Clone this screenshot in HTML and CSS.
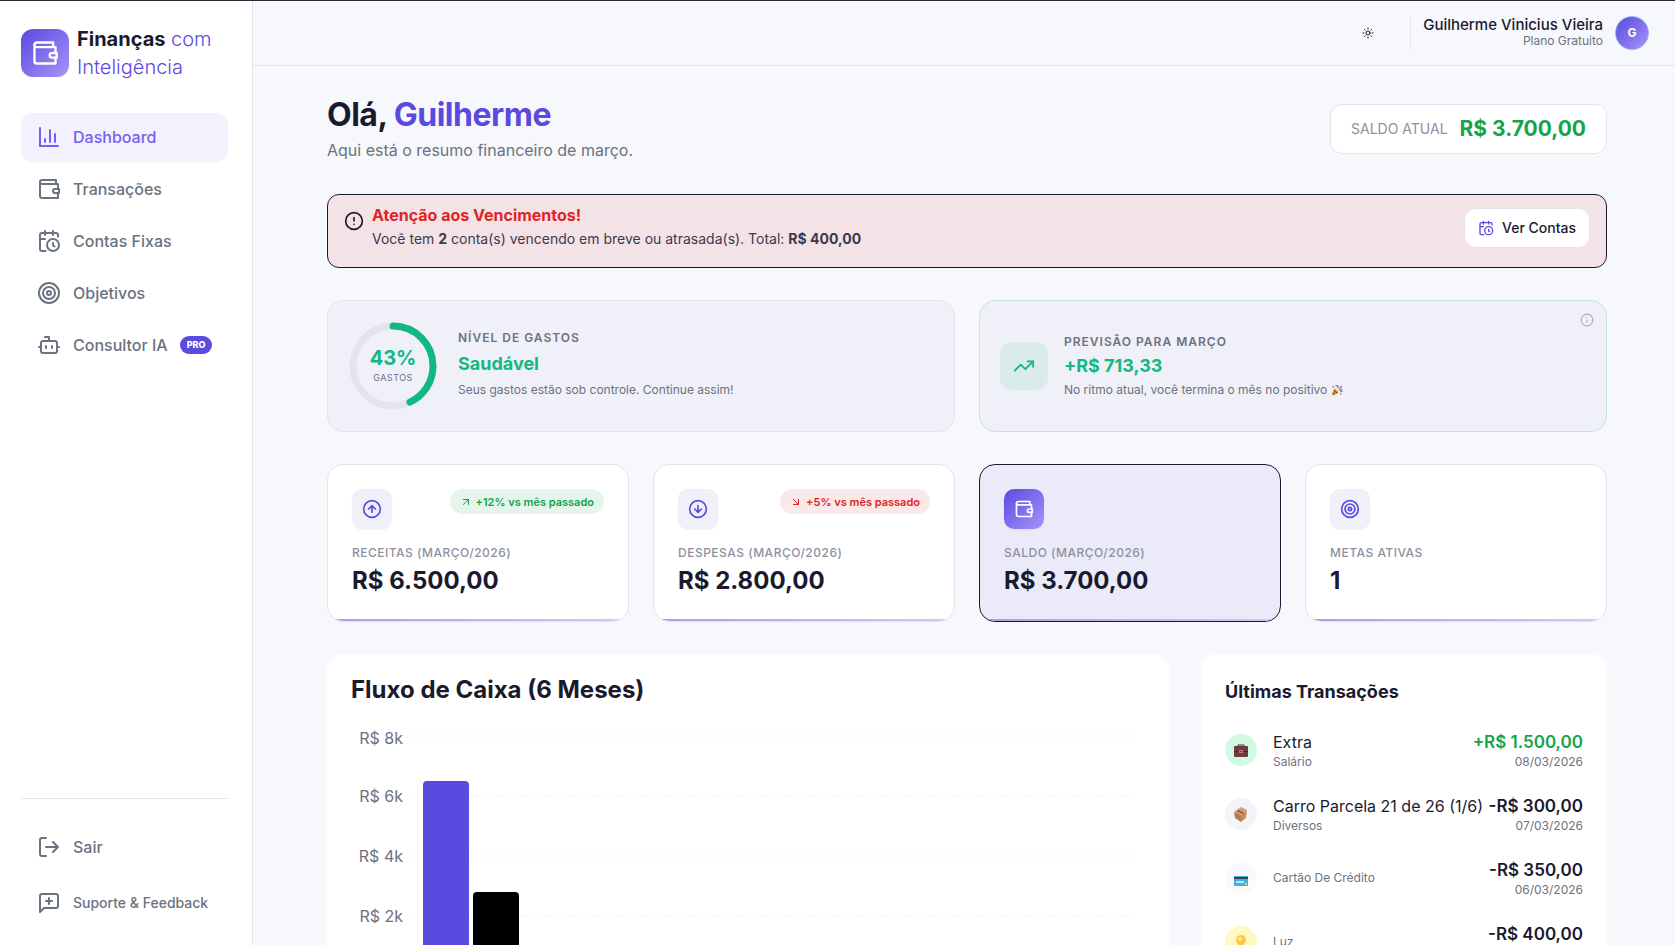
FILE: index.html
```html
<!DOCTYPE html>
<html lang="pt-BR">
<head>
    <meta charset="UTF-8">
    <meta name="viewport" content="width=device-width, initial-scale=1.0">
    <title>Finanças com Inteligência</title>
    <link rel="stylesheet" href="styles.css">
</head>
<body>
    <!-- Ícones reutilizados -->
    <svg class="sprite" aria-hidden="true">
        <symbol id="i-wallet" viewBox="0 0 24 24"><path d="M21 12V7H5a2 2 0 0 1 0-4h14v4"/><path d="M3 5v14a2 2 0 0 0 2 2h16v-5"/><path d="M18 12a2 2 0 0 0 0 4h4v-4Z"/></symbol>
        <symbol id="i-calendar" viewBox="0 0 24 24"><path d="M21 7.5V6a2 2 0 0 0-2-2H5a2 2 0 0 0-2 2v14a2 2 0 0 0 2 2h3.5"/><path d="M16 2v4M8 2v4M3 10h5"/><path d="M17.5 17.5 16 16.3V14"/><circle cx="16" cy="16" r="6"/></symbol>
        <symbol id="i-target" viewBox="0 0 24 24"><circle cx="12" cy="12" r="10"/><circle cx="12" cy="12" r="6"/><circle cx="12" cy="12" r="2"/></symbol>
    </svg>

    <div class="app">
        <aside class="sidebar">
            <div class="brand">
                <span class="brand-icon"><svg class="icon"><use href="#i-wallet"/></svg></span>
                <span class="brand-name"><strong>Finanças</strong> com Inteligência</span>
            </div>
            <nav class="nav">
                <a class="nav-item active" href="#">
                    <svg class="icon" viewBox="0 0 24 24"><path d="M3 3v18h18M18 17V9M13 17V5M8 17v-3"/></svg>
                    Dashboard
                </a>
                <a class="nav-item" href="#"><svg class="icon"><use href="#i-wallet"/></svg>Transações</a>
                <a class="nav-item" href="#"><svg class="icon"><use href="#i-calendar"/></svg>Contas Fixas</a>
                <a class="nav-item" href="#"><svg class="icon"><use href="#i-target"/></svg>Objetivos</a>
                <a class="nav-item" href="#">
                    <svg class="icon" viewBox="0 0 24 24"><path d="M12 8V4H8"/><rect width="16" height="12" x="4" y="8" rx="2"/><path d="M2 14h2M20 14h2M15 13v2M9 13v2"/></svg>
                    Consultor IA
                    <span class="pro">PRO</span>
                </a>
            </nav>
            <div class="sidebar-footer">
                <button class="nav-item" type="button">
                    <svg class="icon" viewBox="0 0 24 24"><path d="M9 21H5a2 2 0 0 1-2-2V5a2 2 0 0 1 2-2h4M16 17l5-5-5-5M21 12H9"/></svg>
                    Sair
                </button>
                <button class="nav-item small" type="button">
                    <svg class="icon" viewBox="0 0 24 24"><path d="M21 15a2 2 0 0 1-2 2H7l-4 4V5a2 2 0 0 1 2-2h14a2 2 0 0 1 2 2zM12 7v6M9 10h6"/></svg>
                    Suporte &amp; Feedback
                </button>
            </div>
        </aside>

        <div class="page">
            <header class="topbar">
                <button class="theme" type="button" aria-label="Alternar tema">
                    <svg class="icon" viewBox="0 0 24 24"><circle cx="12" cy="12" r="4"/><path d="M12 2v2M12 20v2M4.93 4.93l1.41 1.41M17.66 17.66l1.41 1.41M2 12h2M20 12h2M6.34 17.66l-1.41 1.41M19.07 4.93l-1.41 1.41"/></svg>
                </button>
                <div class="user">
                    <div class="user-info">
                        <span class="user-name">Guilherme Vinicius Vieira</span>
                        <span class="user-plan">Plano Gratuito</span>
                    </div>
                    <span class="avatar">G</span>
                </div>
            </header>

            <main class="content">
                <section class="welcome">
                    <div>
                        <h1>Olá, <span>Guilherme</span></h1>
                        <p>Aqui está o resumo financeiro de março.</p>
                    </div>
                    <div class="balance">
                        <span class="balance-label">SALDO ATUAL</span>
                        <span class="balance-value">R$ 3.700,00</span>
                    </div>
                </section>

                <section class="alert">
                    <svg class="icon" viewBox="0 0 24 24"><circle cx="12" cy="12" r="10"/><path d="M12 8v4M12 16h.01"/></svg>
                    <div class="alert-text">
                        <h2>Atenção aos Vencimentos!</h2>
                        <p>Você tem <strong>2</strong> conta(s) vencendo em breve ou atrasada(s). Total: <strong>R$ 400,00</strong></p>
                    </div>
                    <button class="alert-button" type="button"><svg class="icon"><use href="#i-calendar"/></svg>Ver Contas</button>
                </section>

                <section class="insights">
                    <article class="insight">
                        <div class="gauge">
                            <svg viewBox="0 0 90 90">
                                <circle class="gauge-track" cx="45" cy="45" r="40"/>
                                <circle class="gauge-value" cx="45" cy="45" r="40" pathLength="100"/>
                            </svg>
                            <div class="gauge-text"><strong>43%</strong><span>GASTOS</span></div>
                        </div>
                        <div class="insight-text">
                            <h3>NÍVEL DE GASTOS</h3>
                            <strong>Saudável</strong>
                            <p>Seus gastos estão sob controle. Continue assim!</p>
                        </div>
                    </article>
                    <article class="insight forecast">
                        <span class="trend-icon"><svg class="icon" viewBox="0 0 24 24"><path d="m22 7-8.5 8.5-5-5L2 17"/><path d="M16 7h6v6"/></svg></span>
                        <div class="insight-text">
                            <h3>PREVISÃO PARA MARÇO</h3>
                            <strong>+R$ 713,33</strong>
                            <p>No ritmo atual, você termina o mês no positivo
                                <svg class="party" viewBox="0 0 24 24"><path fill="#f2a52c" d="M1 23 7 8l9 9z"/><path fill="#8a4b32" d="m4 16 5 5-3 1-3-3zM6 11l8 7-3 1-6-5z"/><path fill="#d94a8c" d="M9 2h3v3H9zM19 13h4v3h-4zM3 4h3v3H3z"/><path fill="#36a9e1" d="m12 8 1-6 3 1-1 6zM17 12l6-3v3l-5 3z"/><path fill="#f45b78" d="m15 11 5-8 3 2-6 7zM18 18h3v3h-3z"/></svg>
                            </p>
                        </div>
                        <button class="info" type="button" aria-label="Informações"><svg class="icon" viewBox="0 0 24 24"><circle cx="12" cy="12" r="10"/><path d="M12 16v-4M12 8h.01"/></svg></button>
                    </article>
                </section>

                <section class="stats">
                    <article class="stat">
                        <div class="stat-top">
                            <span class="stat-icon"><svg class="icon" viewBox="0 0 24 24"><circle cx="12" cy="12" r="10"/><path d="m16 12-4-4-4 4M12 16V8"/></svg></span>
                            <span class="change up"><svg class="icon" viewBox="0 0 24 24"><path d="M7 7h10v10M7 17 17 7"/></svg>+12% vs mês passado</span>
                        </div>
                        <h3>RECEITAS (MARÇO/2026)</h3>
                        <strong>R$ 6.500,00</strong>
                    </article>
                    <article class="stat">
                        <div class="stat-top">
                            <span class="stat-icon"><svg class="icon" viewBox="0 0 24 24"><circle cx="12" cy="12" r="10"/><path d="m8 12 4 4 4-4M12 8v8"/></svg></span>
                            <span class="change down"><svg class="icon" viewBox="0 0 24 24"><path d="m7 7 10 10M17 7v10H7"/></svg>+5% vs mês passado</span>
                        </div>
                        <h3>DESPESAS (MARÇO/2026)</h3>
                        <strong>R$ 2.800,00</strong>
                    </article>
                    <article class="stat highlight">
                        <div class="stat-top">
                            <span class="stat-icon"><svg class="icon"><use href="#i-wallet"/></svg></span>
                        </div>
                        <h3>SALDO (MARÇO/2026)</h3>
                        <strong>R$ 3.700,00</strong>
                    </article>
                    <article class="stat">
                        <div class="stat-top">
                            <span class="stat-icon"><svg class="icon"><use href="#i-target"/></svg></span>
                        </div>
                        <h3>METAS ATIVAS</h3>
                        <strong>1</strong>
                    </article>
                </section>

                <section class="panels">
                    <article class="panel">
                        <h2 class="chart-title">Fluxo de Caixa (6 Meses)</h2>
                        <svg class="chart" width="100%" height="300">
                            <g class="grid">
                                <line x1="60" x2="99%" y1="20" y2="20"/>
                                <line x1="60" x2="99%" y1="80" y2="80"/>
                                <line x1="60" x2="99%" y1="140" y2="140"/>
                                <line x1="60" x2="99%" y1="200" y2="200"/>
                                <line x1="60" x2="99%" y1="260" y2="260"/>
                            </g>
                            <g class="axis">
                                <text x="52" y="28">R$ 8k</text>
                                <text x="52" y="86">R$ 6k</text>
                                <text x="52" y="146">R$ 4k</text>
                                <text x="52" y="206">R$ 2k</text>
                                <text x="52" y="266">R$ 0k</text>
                            </g>
                            <path class="bar-in" d="M72 260V69a4 4 0 0 1 4-4h38a4 4 0 0 1 4 4v191z"/>
                            <path class="bar-out" d="M122 260v-80a4 4 0 0 1 4-4h38a4 4 0 0 1 4 4v80z"/>
                        </svg>
                    </article>

                    <article class="panel">
                        <h2 class="list-title">Últimas Transações</h2>
                        <ul class="transactions">
                            <li>
                                <span class="category salary"><svg viewBox="0 0 16 16"><path fill="none" stroke="#4b2936" d="M5 5V3h6v2"/><rect x="1" y="4" width="14" height="11" rx="1" fill="#6d3c4b"/><path fill="#4b2936" d="M1 9h14v1H1z"/><path fill="#d8793d" d="M6 8h4v3H6z"/><path fill="#6d3c4b" d="M7 9h2v1H7z"/></svg></span>
                                <div class="description"><span>Extra</span><small>Salário</small></div>
                                <div class="amount positive"><strong>+R$ 1.500,00</strong><small>08/03/2026</small></div>
                            </li>
                            <li>
                                <span class="category misc"><svg viewBox="0 0 16 16"><path fill="#d99a6c" d="m1 6 7-5 6 3-6 5z"/><path fill="#b97850" d="m1 6 7 3v7l-6-4z"/><path fill="#c88b5d" d="m8 9 6-5-1 8-5 4z"/><path fill="#7d4f33" d="m5 4 6 3-1 1-6-3z"/></svg></span>
                                <div class="description"><span>Carro Parcela 21 de 26 (1/6)</span><small>Diversos</small></div>
                                <div class="amount"><strong>-R$ 300,00</strong><small>07/03/2026</small></div>
                            </li>
                            <li>
                                <span class="category card"><svg viewBox="0 0 16 16"><rect x="1" y="6" width="14" height="10" rx="1" fill="#42afe3"/><path fill="#39434f" d="M1 7h14v2H1z"/><path fill="#c7e5ef" d="M3 11h8v2H3z"/><path fill="#f2c94c" d="M12 13h2v2h-2z"/></svg></span>
                                <div class="description"><small>Cartão De Crédito</small></div>
                                <div class="amount"><strong>-R$ 350,00</strong><small>06/03/2026</small></div>
                            </li>
                            <li>
                                <span class="category light"><svg viewBox="0 0 16 16"><circle cx="8" cy="6" r="5" fill="#ffc73d"/><path fill="#ffc73d" d="m4 8 2 4h4l2-4z"/><circle cx="7" cy="5" r="2" fill="#ffe69a"/><path fill="#8b97a3" d="M6 12h4v2l-1 2H7l-1-2z"/></svg></span>
                                <div class="description"><small>Luz</small></div>
                                <div class="amount"><strong>-R$ 400,00</strong><small>05/03/2026</small></div>
                            </li>
                        </ul>
                    </article>
                </section>
            </main>
        </div>
    </div>
</body>
</html>
```

FILE: styles.css
```css
* {
    box-sizing: border-box;
}
body {
    margin: 0;
    border-top: 1px solid #2b2a33;
    background: #f7f8fc;
    color: #1a1a2e;
    font-family: Inter, "Liberation Sans", sans-serif;
    font-size: 16px;
    line-height: 24px;
}
h1, h2, h3, p, ul {
    margin: 0;
    padding: 0;
}
button {
    font: inherit;
    color: inherit;
    background: none;
    border: 0;
    padding: 0;
    cursor: pointer;
}
small {
    font-size: 12px;
    line-height: 16px;
    color: #6b7280;
}
.sprite {
    display: none;
}
.icon {
    width: 24px;
    height: 24px;
    flex-shrink: 0;
    fill: none;
    stroke: currentColor;
    stroke-width: 2;
    stroke-linecap: round;
    stroke-linejoin: round;
}
.app {
    display: flex;
    align-items: flex-start;
}

/* Menu lateral */
.sidebar {
    position: sticky;
    top: 0;
    flex: 0 0 253px;
    min-width: 0;
    height: calc(100vh - 1px);
    display: flex;
    flex-direction: column;
    padding: 24px 24px 18px 21px;
    background: #fff;
    border-right: 1px solid #e4e4f0;
}
.brand {
    display: flex;
    align-items: center;
    gap: 8px;
    margin-bottom: 32px;
}
.brand-icon {
    display: grid;
    place-items: center;
    width: 48px;
    height: 48px;
    border-radius: 12px;
    color: #fff;
    background: linear-gradient(135deg, #5b4adf, #a594f9);
}
.brand-icon .icon {
    width: 28px;
    height: 28px;
}
.brand-name {
    flex: 1;
    font-size: 20px;
    line-height: 28px;
    font-weight: 300;
    color: #5b4adf;
}
.brand-name strong {
    font-weight: 700;
    color: #1a1a2e;
}
.nav {
    display: flex;
    flex-direction: column;
    gap: 4px;
}
.nav-item {
    display: flex;
    align-items: center;
    gap: 12px;
    height: 48px;
    padding: 0 16px;
    border-radius: 12px;
    font-weight: 500;
    color: #6b7280;
    text-decoration: none;
    white-space: nowrap;
}
.nav-item.active {
    background: #f3f1fd;
    color: #7261f0;
    box-shadow: 0 1px 2px rgba(26, 26, 46, 0.05);
}
.nav-item.small {
    font-size: 14px;
}
.pro {
    padding: 0 7px;
    border-radius: 9px;
    background: #5b4adf;
    color: #fff;
    font-size: 9px;
    line-height: 18px;
    font-weight: 800;
}
.sidebar-footer {
    display: flex;
    flex-direction: column;
    gap: 8px;
    margin-top: auto;
    padding-top: 24px;
    border-top: 1px solid #e4e4f0;
}

/* Barra superior */
.page {
    flex: 1;
    min-width: 0;
}
.topbar {
    display: flex;
    justify-content: flex-end;
    align-items: center;
    gap: 36px;
    height: 65px;
    padding: 0 26px;
    border-bottom: 1px solid #e4e4f0;
}
.theme {
    display: flex;
}
.theme .icon {
    width: 12px;
    height: 12px;
}
.user {
    display: flex;
    align-items: center;
    gap: 12px;
    padding-left: 12px;
    border-left: 1px solid #e4e4f0;
}
.user-info {
    display: flex;
    flex-direction: column;
    text-align: right;
}
.user-name {
    font-size: 15px;
    line-height: 16px;
    font-weight: 500;
}
.user-plan {
    font-size: 12px;
    line-height: 16px;
    color: #6b7280;
}
.avatar {
    display: grid;
    place-items: center;
    width: 34px;
    height: 34px;
    border: 1px solid #8ab4f8;
    border-radius: 50%;
    background: linear-gradient(135deg, #5b4adf, #a594f9);
    color: #fff;
    font-size: 12px;
    font-weight: 700;
}

/* Conteúdo */
.content {
    display: flex;
    flex-direction: column;
    gap: 32px;
    max-width: 1354px;
    margin: 0 auto;
    padding: 30px 34px 32px 40px;
}
.welcome {
    display: flex;
    justify-content: space-between;
    align-items: center;
}
.welcome h1 {
    font-size: 32px;
    line-height: 38px;
    font-weight: 700;
    letter-spacing: -0.5px;
}
.welcome h1 span {
    color: #5b4adf;
}
.welcome p {
    margin-top: 4px;
    color: #6b7280;
}
.balance {
    display: flex;
    align-items: center;
    gap: 12px;
    height: 50px;
    padding: 0 20px;
    border: 1px solid #e4e4f0;
    border-radius: 12px;
    background: #fff;
}
.balance-label {
    font-size: 14px;
    color: #8e90a0;
}
.balance-value {
    font-size: 21px;
    font-weight: 700;
    color: #16a34a;
}
.alert {
    display: flex;
    align-items: flex-start;
    gap: 8px;
    height: 74px;
    padding: 8px 16px;
    border: 1px solid #1a1a2e;
    border-radius: 12px;
    background: #f4e3e6;
}
.alert > .icon {
    width: 20px;
    height: 20px;
    margin-top: 8px;
}
.alert-text {
    flex: 1;
}
.alert-text h2 {
    font-size: 16px;
    font-weight: 700;
    color: #dc2626;
}
.alert-text p {
    font-size: 14px;
    color: #3b3a4c;
}
.alert-button {
    display: flex;
    align-items: center;
    gap: 8px;
    height: 40px;
    margin-top: 5px;
    padding: 0 13px;
    border: 1px solid #e4e4f0;
    border-radius: 12px;
    background: #fff;
    font-size: 14px;
    font-weight: 500;
}
.alert-button .icon {
    width: 16px;
    height: 16px;
    color: #5b4adf;
}

.insights {
    display: grid;
    grid-template-columns: 1fr 1fr;
    gap: 24px;
}
.insight {
    position: relative;
    display: flex;
    align-items: center;
    gap: 20px;
    padding: 20px;
    border: 1px solid #e4e4f0;
    border-radius: 16px;
    background: #f0f0f8;
}
.insight.forecast {
    gap: 16px;
    border-color: #c0e6dd;
}
.gauge {
    display: grid;
    width: 90px;
    height: 90px;
}
.gauge > * {
    grid-area: 1 / 1;
}
.gauge svg {
    transform: rotate(-90deg);
}
.gauge circle {
    fill: none;
    stroke-width: 7;
}
.gauge .gauge-track {
    stroke: #e4e4f0;
}
.gauge .gauge-value {
    stroke: #10b981;
    stroke-linecap: round;
    stroke-dasharray: 43 100;
}
.gauge-text {
    display: flex;
    flex-direction: column;
    align-items: center;
    justify-content: center;
}
.gauge-text strong {
    font-size: 20px;
    font-weight: 700;
    color: #10b981;
}
.gauge-text span {
    font-size: 9px;
    line-height: 16px;
    letter-spacing: 0.5px;
    color: #6b7280;
}
.insight-text {
    padding-bottom: 4px;
}
.insight-text h3 {
    font-size: 12px;
    line-height: 20px;
    font-weight: 600;
    letter-spacing: 1px;
    color: #6b7280;
}
.insight-text strong {
    display: block;
    margin: 4px 0;
    font-size: 18px;
    line-height: 24px;
    font-weight: 700;
    color: #10b981;
}
.forecast .insight-text {
    padding-bottom: 0;
}
.forecast .insight-text strong {
    margin: 2px 0;
}
.insight-text p {
    font-size: 12px;
    line-height: 20px;
    color: #6b7280;
}
.trend-icon {
    display: grid;
    place-items: center;
    width: 48px;
    height: 48px;
    border-radius: 12px;
    background: #d9ece9;
    color: #10b981;
}
.trend-icon .icon {
    width: 22px;
    height: 22px;
}
.party {
    width: 12px;
    height: 12px;
    vertical-align: -2px;
}
.info {
    position: absolute;
    top: 12px;
    right: 12px;
    display: flex;
    color: #b0b1be;
}
.info .icon {
    width: 14px;
    height: 14px;
}

/* Indicadores */
.stats {
    display: grid;
    grid-template-columns: repeat(4, 1fr);
    gap: 24px;
}
.stat {
    position: relative;
    overflow: hidden;
    padding: 24px;
    border: 1px solid #e4e4f0;
    border-radius: 16px;
    background: #fff;
}
.stat::after {
    content: "";
    position: absolute;
    left: 0;
    right: 0;
    bottom: 0;
    height: 2px;
    background: linear-gradient(90deg, #a79ef0, #d0c9fa);
}
.stat.highlight {
    border-color: #1a1a2e;
    background: #ebeaf8;
}
.stat-top {
    display: flex;
    justify-content: space-between;
    align-items: flex-start;
    margin-bottom: 14px;
}
.stat-icon {
    display: grid;
    place-items: center;
    width: 40px;
    height: 40px;
    border-radius: 10px;
    background: #f0f0f8;
    color: #5b4adf;
    box-shadow: 0 1px 2px rgba(26, 26, 46, 0.06);
}
.stat-icon .icon {
    width: 20px;
    height: 20px;
}
.highlight .stat-icon {
    background: linear-gradient(135deg, #5b4adf, #a594f9);
    color: #fff;
}
.change {
    display: flex;
    align-items: center;
    gap: 4px;
    height: 25px;
    padding: 0 10px;
    border-radius: 13px;
    font-size: 11px;
    font-weight: 600;
}
.change .icon {
    width: 12px;
    height: 12px;
}
.change.up {
    background: #e5f5eb;
    color: #16a34a;
}
.change.down {
    background: #fbe8e8;
    color: #dc2626;
}
.stat h3 {
    font-size: 12px;
    line-height: 20px;
    font-weight: 500;
    letter-spacing: 0.5px;
    color: #8e90a0;
}
.stat strong {
    display: block;
    margin-bottom: -2px;
    font-size: 24px;
    line-height: 36px;
    font-weight: 700;
}

/* Gráfico e transações */
.panels {
    display: grid;
    grid-template-columns: 1fr 406px;
    gap: 32px;
}
.panel {
    padding: 20px 24px;
    border-radius: 16px;
    background: #fff;
}
.panel h2 {
    font-weight: 700;
}
.chart-title {
    font-size: 24px;
    line-height: 32px;
}
.chart {
    display: block;
    margin-top: 10px;
}
.grid line {
    stroke: #f3f3f7;
    stroke-dasharray: 3 3;
}
.axis text {
    fill: #6b7280;
    text-anchor: end;
}
.bar-in {
    fill: #5b4adf;
}
.bar-out {
    fill: #000;
}
.list-title {
    padding-top: 4px;
    font-size: 18px;
    line-height: 28px;
}
.transactions {
    margin-top: 12px;
    list-style: none;
}
.transactions li {
    display: flex;
    align-items: center;
    height: 64px;
}
.category {
    display: grid;
    place-items: center;
    flex-shrink: 0;
    width: 32px;
    height: 32px;
    margin-right: 16px;
    border-radius: 50%;
}
.category svg {
    width: 16px;
    height: 16px;
}
.salary {
    background: #d1fae5;
}
.misc {
    background: #f1f5f9;
}
.card {
    background: #f8fafc;
}
.light {
    background: #fef9c3;
}
.description, .amount {
    display: flex;
    flex-direction: column;
    white-space: nowrap;
}
.description {
    flex: 1;
    min-width: 0;
}
.amount {
    text-align: right;
}
.amount strong {
    font-size: 17px;
    font-weight: 600;
}
.amount.positive strong {
    color: #16a34a;
}
```
